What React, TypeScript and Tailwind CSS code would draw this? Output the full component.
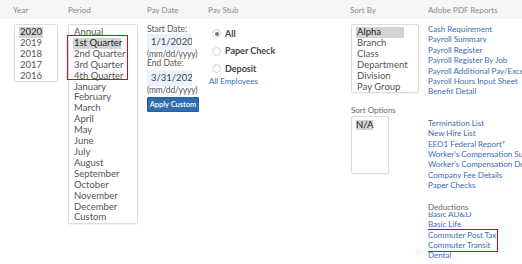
import React from "react";

const font = { fontFamily: "Lato, 'Open Sans', Arial, sans-serif" };

const years = ["2020", "2019", "2018", "2017", "2016"];
const periods = [
  "Annual",
  "1st Quarter",
  "2nd Quarter",
  "3rd Quarter",
  "4th Quarter",
  "January",
  "February",
  "March",
  "April",
  "May",
  "June",
  "July",
  "August",
  "September",
  "October",
  "November",
  "December",
  "Custom",
];
const sortBy = ["Alpha", "Branch", "Class", "Department", "Division", "Pay Group"];

const reportsA = [
  "Cash Requirement",
  "Payroll Summary",
  "Payroll Register",
  "Payroll Register By Job",
  "Payroll Additional Pay/Exception",
  "Payroll Hours Input Sheet",
  "Benefit Detail",
];
const reportsB = [
  "Termination List",
  "New Hire List",
  "EEO1 Federal Report*",
  "Worker's Compensation Summary",
  "Worker's Compensation Detail",
  "Company Fee Details",
  "Paper Checks",
];

function ListBox({
  items,
  selected,
  itemWidth,
  className,
}: {
  items: string[];
  selected: number;
  itemWidth: string;
  className: string;
}) {
  return (
    <div
      className={`border border-[#dcdcdc] rounded-[2px] bg-white shadow-[0_1px_1px_rgba(0,0,0,0.05)] pt-[2px] pl-[4px] ${className}`}
    >
      {items.map((it, i) => (
        <div
          key={it}
          className={`${itemWidth} pl-[1px] text-[9.5px] leading-[10.9px] whitespace-nowrap ${
            i === selected ? "bg-[#d3d3d3] text-[#222]" : "text-[#555]"
          }`}
        >
          {it}
        </div>
      ))}
    </div>
  );
}

function Radio({ label, checked }: { label: string; checked?: boolean }) {
  return (
    <div className="flex items-center h-[9px] gap-[4px]">
      <span className="w-[9px] h-[9px] rounded-full border border-[#d6d6d6] bg-white shadow-[inset_0_1px_1px_rgba(0,0,0,0.06)] flex items-center justify-center">
        {checked && <span className="w-[4px] h-[4px] rounded-full bg-[#777]" />}
      </span>
      <span className="text-[9px] font-bold text-[#444]">{label}</span>
    </div>
  );
}

// red annotation frame drawn over a group of rows
function Mark({ className }: { className: string }) {
  return <span className={`absolute pointer-events-none ring-1 ring-inset ring-red-600 ${className}`} />;
}

export default function App() {
  return (
    <div className="w-[522px] h-[264px] bg-white overflow-hidden" style={font}>
      {/* header band */}
      <div className="flex h-[19px] items-center bg-[#f6f6f6] text-[8px] text-[#888]">
        <div className="w-[68px] pl-[13px]">Year</div>
        <div className="w-[79px]">Period</div>
        <div className="w-[61px]">Pay Date</div>
        <div className="w-[142px]">Pay Stub</div>
        <div className="w-[78px]">Sort By</div>
        <div className="flex-1 whitespace-nowrap">Adobe PDF Reports</div>
      </div>

      <div className="flex pt-[5px]">
        {/* Year */}
        <div className="w-[68px] pl-[14px]">
          <ListBox items={years} selected={0} itemWidth="w-[24px]" className="w-[44px] h-[58px]" />
        </div>

        {/* Period */}
        <div className="w-[79px]">
          <div className="relative">
            <ListBox items={periods} selected={1} itemWidth="w-[48px]" className="w-[70px] h-[200px]" />
            <Mark className="left-[-1px] top-[11px] w-[61px] h-[45px]" />
          </div>
        </div>

        {/* Pay Date */}
        <div className="w-[61px] text-[8.5px] text-[#555]">
          <div className="leading-[10px]">Start Date:</div>
          <div className="w-[45px] h-[16px] bg-[#eaf3fd] flex items-center pl-[4px] text-[9.5px] text-[#444] overflow-hidden whitespace-nowrap">
            1/1/2020
          </div>
          <div className="leading-[9px] tracking-[-0.2px] whitespace-nowrap">(mm/dd/yyyy)</div>
          <div className="leading-[9px]">End Date:</div>
          <div className="mt-[2px] w-[45px] h-[16px] bg-[#eaf3fd] flex items-center pl-[4px] text-[9.5px] text-[#444] overflow-hidden whitespace-nowrap">
            3/31/2020
          </div>
          <div className="leading-[9px] tracking-[-0.2px] whitespace-nowrap">(mm/dd/yyyy)</div>
          <button className="mt-[2px] w-[52px] h-[15px] bg-[#2f6db2] border border-[#28609f] rounded-[1px] text-white text-[7.5px] font-semibold whitespace-nowrap flex items-center justify-center">
            Apply Custom
          </button>
        </div>

        {/* Pay Stub */}
        <div className="w-[142px] pl-[1px]">
          <div className="pt-[5px] pl-[3px] flex flex-col gap-[8.5px]">
            <Radio label="All" checked />
            <Radio label="Paper Check" />
            <Radio label="Deposit" />
          </div>
          <div className="mt-[3px] text-[8px] leading-[10px] text-[#3b6db3]">All Employees</div>
        </div>

        {/* Sort By */}
        <div className="w-[78px] pl-[1px]">
          <ListBox items={sortBy} selected={0} itemWidth="w-[48px]" className="w-[68px] h-[69px]" />
          <div className="mt-[12px] text-[8px] leading-[10px] text-[#666]">Sort Options</div>
          <div className="mt-[1px] w-[38px] h-[58px] border border-[#dcdcdc] rounded-[2px] bg-white pt-[3px] pl-[4px] shadow-[0_1px_1px_rgba(0,0,0,0.05)]">
            <div className="w-[17px] bg-[#d3d3d3] text-[9.5px] leading-[10px] text-[#222]">N/A</div>
          </div>
        </div>

        {/* Adobe PDF Reports */}
        <div className="flex-1 min-w-0 text-[8px] leading-[10.4px] text-[#3b6db3] whitespace-nowrap overflow-hidden">
          {reportsA.map((r) => (
            <div key={r}>{r}</div>
          ))}
          <div className="h-[21px]" />
          {reportsB.map((r) => (
            <div key={r}>{r}</div>
          ))}
          <div className="mt-[11px] leading-[10px] text-[#666]">Deductions</div>
          <div className="overflow-hidden">
            <div className="mt-[-3px]">
              <div>Basic AD&amp;D</div>
              <div>Basic Life</div>
              <div className="relative w-[70px]">
                <div>Commuter Post Tax</div>
                <div>Commuter Transit</div>
                <Mark className="left-[-2px] top-[-1px] w-[72px] h-[23px]" />
              </div>
              <div>Dental</div>
            </div>
          </div>
        </div>
      </div>
    </div>
  );
}
